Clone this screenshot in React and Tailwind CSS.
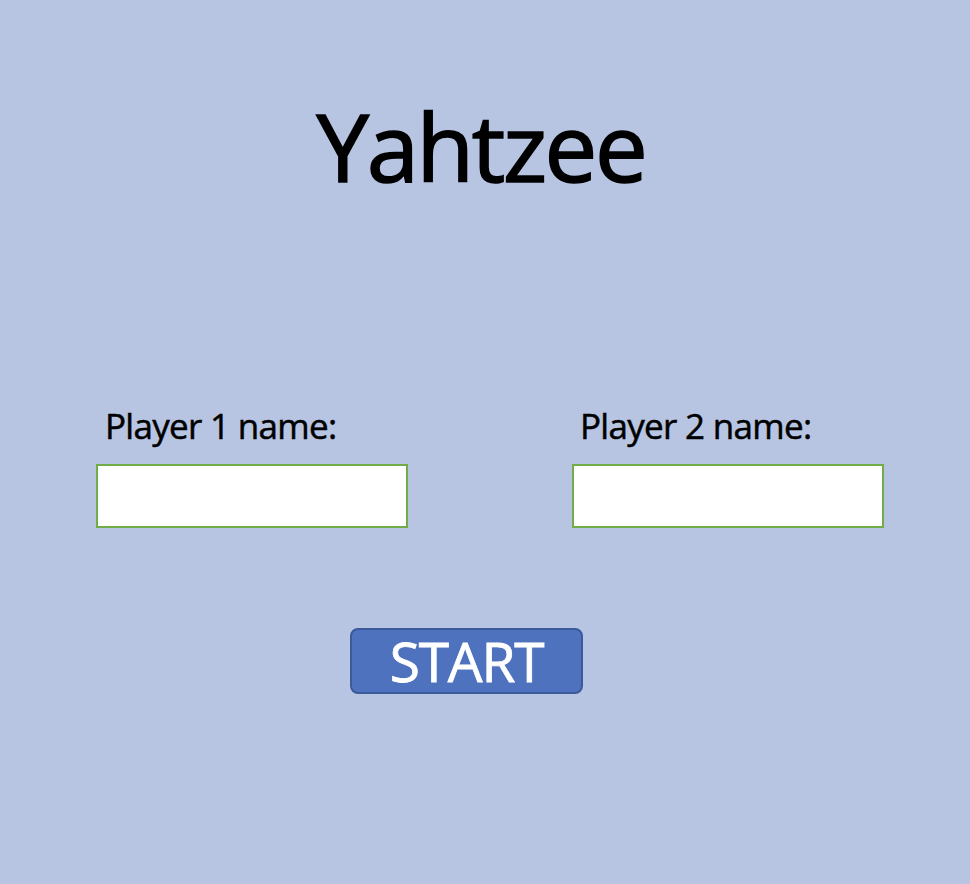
export default function App() {
  return (
    <div className="w-[970px] h-[884px] bg-[#b7c5e3] flex flex-col items-center" style={{ fontFamily: '"Open Sans", "Liberation Sans", sans-serif' }}>
      <h1 className="mt-[86px] mr-[8px] text-[94px] leading-[120px] text-black tracking-[-2.4px] [-webkit-text-stroke:1.6px_black]">Yahtzee</h1>
      <div className="mt-[200px] w-full flex justify-between pl-[96px] pr-[86px]">
        <div className="flex flex-col">
          <label className="ml-[9px] text-[35px] leading-[40px] text-black tracking-[-0.7px] [-webkit-text-stroke:0.5px_black]">Player 1 name:</label>
          <input className="mt-[18px] w-[312px] h-[64px] bg-white border-2 border-[#70ad47] outline-none" />
        </div>
        <div className="flex flex-col">
          <label className="ml-[8px] text-[35px] leading-[40px] text-black tracking-[-0.7px] [-webkit-text-stroke:0.5px_black]">Player 2 name:</label>
          <input className="mt-[18px] w-[312px] h-[64px] bg-white border-2 border-[#70ad47] outline-none" />
        </div>
      </div>
      <button className="mt-[100px] mr-[37px] w-[233px] h-[66px] bg-[#4f72be] border-2 border-[#3a5a9a] rounded-[8px] text-white text-[55px] leading-[60px] tracking-[-1.2px] [-webkit-text-stroke:0.8px_white] flex items-center justify-center">START</button>
    </div>
  );
}
